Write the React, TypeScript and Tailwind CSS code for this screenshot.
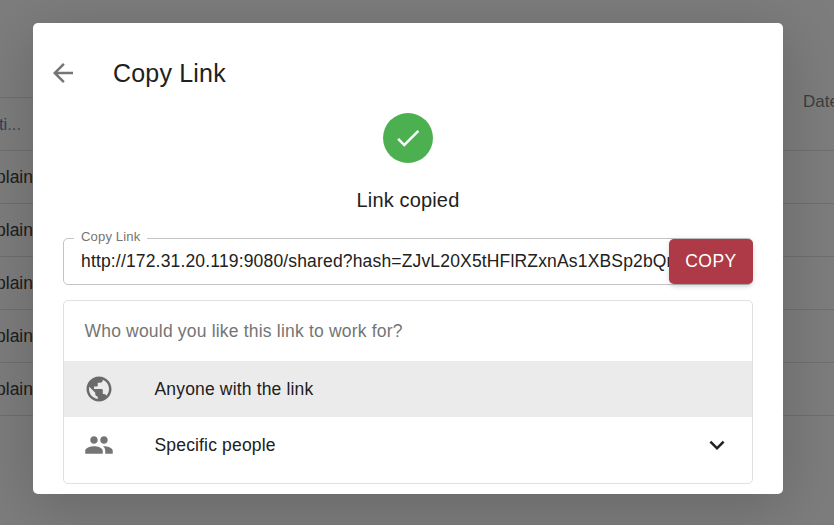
import React from "react";

const rows = [0, 1, 2, 3, 4];

type IconProps = { d: string; className?: string };

function Icon({ d, className = "" }: IconProps) {
  return (
    <svg viewBox="0 0 24 24" className={`size-[30px] shrink-0 fill-current ${className}`} aria-hidden="true">
      <path d={d} />
    </svg>
  );
}

const icons = {
  back: "M20 11H7.83l5.59-5.59L12 4l-8 8 8 8 1.41-1.41L7.83 13H20v-2z",
  check: "M9 16.17L4.83 12l-1.42 1.41L9 19 21 7l-1.41-1.41z",
  globe:
    "M12 2C6.48 2 2 6.48 2 12s4.48 10 10 10 10-4.48 10-10S17.52 2 12 2zm-1 17.93c-3.95-.49-7-3.85-7-7.93 0-.62.08-1.21.21-1.79L9 15v1c0 1.1.9 2 2 2v1.93zm6.9-2.54c-.26-.81-1-1.39-1.9-1.39h-1v-3c0-.55-.45-1-1-1H8v-2h2c.55 0 1-.45 1-1V7h2c1.1 0 2-.9 2-2v-.41c2.93 1.19 5 4.06 5 7.41 0 2.08-.8 3.97-2.1 5.39z",
  people:
    "M16 11c1.66 0 2.99-1.34 2.99-3S17.66 5 16 5c-1.66 0-3 1.34-3 3s1.34 3 3 3zm-8 0c1.66 0 2.99-1.34 2.99-3S9.66 5 8 5C6.34 5 5 6.34 5 8s1.34 3 3 3zm0 2c-2.33 0-7 1.17-7 3.5V19h14v-2.5c0-2.33-4.67-3.5-7-3.5zm8 0c-.29 0-.62.02-.97.05 1.16.84 1.97 1.97 1.97 3.45V19h6v-2.5c0-2.33-4.67-3.5-7-3.5z",
  down: "M16.59 8.59L12 13.17 7.41 8.59 6 10l6 6 6-6z",
};

function BackgroundTable() {
  return (
    <div className="flex h-[525px] w-[834px] justify-between overflow-hidden text-[17.5px] leading-[26px]">
      <div className="flex w-[33px] flex-col">
        <div className="h-[98px] shrink-0 border-b border-[#dedede]" />
        <div className="flex h-[53px] shrink-0 items-center border-b border-[#dedede] text-[16.5px] whitespace-nowrap text-[#8093a5]">
          <span className="-ml-[1px]"><span className="text-[#4f86b5]">ti</span>...</span>
        </div>
        {rows.map((r) => (
          <div key={r} className="flex h-[53px] shrink-0 items-center justify-end border-b border-[#dedede] text-[#3a3a3a]">
            <span>plain</span>
          </div>
        ))}
      </div>
      <div className="flex w-[51px] flex-col">
        <div className="flex h-[151px] shrink-0 items-center border-b border-[#dedede] pt-[53px] pl-5 text-[17px] whitespace-nowrap text-[#7a7a7a]">
          <span>Date</span>
        </div>
        {rows.map((r) => (
          <div key={r} className="h-[53px] shrink-0 border-b border-[#dedede]" />
        ))}
      </div>
    </div>
  );
}

export default function App() {
  return (
    <div className="relative h-[525px] w-[834px] overflow-hidden bg-[#fafafa] font-['Liberation_Sans',Arial,sans-serif] text-[#212121]">
      <BackgroundTable />
      <div className="absolute inset-0 flex items-start bg-black/50 pt-[23px] pl-[33px]">
        <section
          role="dialog"
          className="h-[471px] w-[750px] rounded-[5px] bg-white px-[30px] shadow-[0px_12px_60px_4px_rgba(0,0,0,0.17)]"
        >
          <header className="flex h-[90px] items-center pt-[10px]">
            <button className="-ml-[15px] text-[#757575]" aria-label="Back">
              <Icon d={icons.back} />
            </button>
            <h2 className="ml-[35px] text-[25px] leading-10 tracking-[0.0075em]">Copy Link</h2>
          </header>

          <div className="flex flex-col items-center">
            <div className="flex size-[50px] items-center justify-center rounded-full bg-[#4caf50] text-white">
              <Icon d={icons.check} />
            </div>
            <p className="mt-[21px] text-[20px] leading-8 tracking-[0.0075em]">Link copied</p>
          </div>

          <fieldset className="mt-[13px] flex h-[56px] rounded-[5px] border border-[#c4c4c4]">
            <legend className="ml-[10px] h-[18px] px-[7px] text-[13.125px] leading-[16px] tracking-[0.00938em] whitespace-nowrap text-[#757575]">
              Copy Link
            </legend>
            <div className="flex w-full items-start">
              <div className="w-[605px] shrink-0 overflow-hidden pl-[17px] text-[17.5px] leading-[28px] tracking-[0.00938em] whitespace-nowrap">
                http://172.31.20.119:9080/shared?hash=ZJvL20X5tHFlRZxnAs1XBSp2bQn
              </div>
              <button className="-mt-[8px] -mr-px h-[45px] flex-1 rounded-[5px] bg-[#ad3a46] text-[17.5px] tracking-[0.02857em] text-white shadow-[0px_4px_5px_-2px_rgba(0,0,0,0.12),0px_1px_6px_0px_rgba(0,0,0,0.12)]">
                COPY
              </button>
            </div>
          </fieldset>

          <div className="mt-[15px] h-[184px] rounded-[5px] border border-[#e0e0e0]">
            <p className="flex h-[60px] items-center pl-[20.5px] text-[17.5px] tracking-[0.011em] text-[#757575]">
              Who would you like this link to work for?
            </p>
            <div className="flex h-[56px] items-center bg-[#ebebeb] pl-5 text-[17.5px] tracking-[0.00938em]">
              <Icon d={icons.globe} className="text-[#6a6a6a]" />
              <span className="ml-[40.5px]">Anyone with the link</span>
            </div>
            <div className="flex h-[56px] items-center pr-5 pl-5 text-[17.5px] tracking-[0.00938em]">
              <Icon d={icons.people} className="text-[#757575]" />
              <span className="ml-[40.5px] flex-1">Specific people</span>
              <Icon d={icons.down} />
            </div>
          </div>
        </section>
      </div>
    </div>
  );
}
